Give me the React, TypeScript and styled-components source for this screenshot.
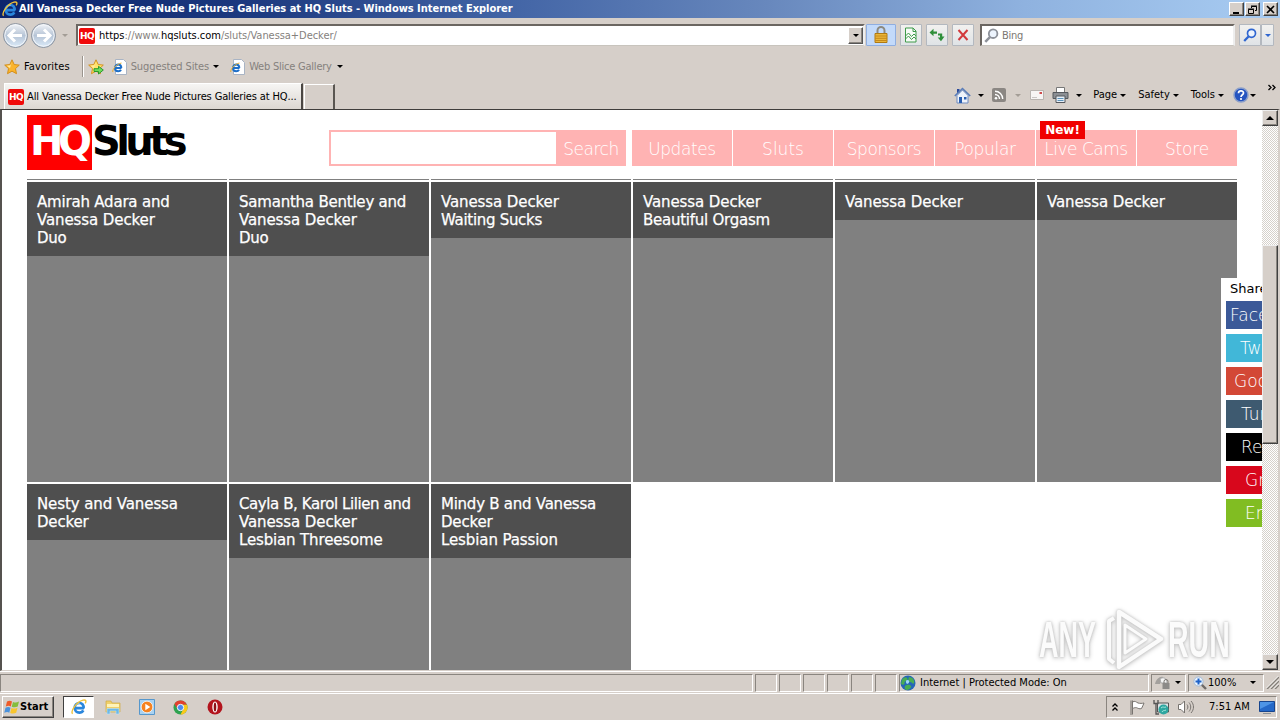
import React from "react";
import styled, { createGlobalStyle, css } from "styled-components";

const face = "#d6cfc9";

const GlobalStyle = createGlobalStyle`
  * { box-sizing: border-box; }
  body { margin: 0; overflow: hidden; background: ${face}; }
  svg { display: block; flex: none; }
`;

const Desktop = styled.div`
  width: 1280px;
  height: 720px;
  display: flex;
  flex-direction: column;
  overflow: hidden;
  background: ${face};
  color: #000;
  font-family: "DejaVu Sans Condensed", "DejaVu Sans", sans-serif;
  font-stretch: condensed;
  font-size: 11px;
`;

const Label = styled.span<{ $ls?: number; $color?: string; $size?: number }>`
  white-space: nowrap;
  line-height: 14px;
  letter-spacing: ${(p) => p.$ls ?? 0}px;
  color: ${(p) => p.$color ?? "#000"};
  font-size: ${(p) => p.$size ?? 11}px;
`;

const Gap = styled.div<{ $w?: number }>`
  flex: ${(p) => (p.$w ? `0 0 ${p.$w}px` : "1")};
`;

const Caret = styled.i<{ $dim?: boolean }>`
  flex: none;
  border: 3px solid transparent;
  border-top-color: ${(p) => (p.$dim ? "#a39d96" : "#000")};
  border-bottom: 0;
`;

/* Title bar */
const TitleBar = styled.header`
  height: 18px;
  flex: none;
  display: flex;
  align-items: center;
  padding: 0 2px 0 2px;
  background: linear-gradient(90deg, #0c246c 0%, #1d3a80 20%, #4365a6 40%, #6888bd 60%, #8fb2df 80%, #a8ccf2 100%);
`;
const TitleText = styled(Label)`
  font-weight: bold;
  margin-left: 1px;
`;
const CaptionButton = styled.div`
  width: 15px;
  height: 14px;
  margin-left: 1px;
  display: grid;
  place-items: center;
  background: ${face};
  border: 1px solid;
  border-color: #fff #404040 #404040 #fff;
  box-shadow: inset -1px -1px #8a857f;
`;

/* Address row */
const AddressRow = styled.div`
  height: 34px;
  flex: none;
  display: flex;
  align-items: center;
  padding-left: 2px;
`;
const Field = styled.div<{ $w: number }>`
  width: ${(p) => p.$w}px;
  height: 22px;
  display: flex;
  align-items: center;
  flex: none;
  background: #fff;
  border: 2px solid;
  border-color: #6b6661 #eee #eee #6b6661;
  border-bottom: 1px solid #c8c4bd;
`;
const DropButton = styled.div`
  width: 15px;
  height: 17px;
  display: grid;
  place-items: center;
  background: ${face};
  border: 1px solid;
  border-color: #fff #555 #555 #fff;
  box-shadow: inset -1px -1px #8a857f;
`;
const ToolButton = styled.div<{ $w: number; $blue?: boolean }>`
  width: ${(p) => p.$w}px;
  height: 22px;
  flex: none;
  display: grid;
  place-items: center;
  border-radius: 1px;
  background: ${(p) => (p.$blue ? "#c3dafa" : "linear-gradient(#f2f1ef, #dfe3e6)")};
  border: 1px solid ${(p) => (p.$blue ? "#8faee0" : "#b3b8bf")};
`;
const BlueCaret = styled(Caret)`
  border-top-color: #2f66d0;
`;
const Favicon = styled.div`
  width: 16px;
  height: 16px;
  flex: none;
  display: grid;
  place-items: center;
  border-radius: 2px;
  background: #f00a0a;
  color: #fff;
  font: bold 9px/16px "DejaVu Sans", sans-serif;
  letter-spacing: -0.6px;
`;

/* Favourites row */
const FavoritesRow = styled.div`
  height: 29px;
  flex: none;
  display: flex;
  align-items: center;
  padding-left: 4px;
`;
const Divider = styled.div`
  width: 2px;
  height: 21px;
  border-left: 1px solid #9a948d;
  border-right: 1px solid #fff;
`;

/* Tabs and command bar */
const TabRow = styled.div`
  height: 28px;
  flex: none;
  display: flex;
  align-items: center;
  padding-left: 4px;
`;
const Tab = styled.div`
  align-self: flex-end;
  width: 299px;
  height: 26px;
  display: flex;
  align-items: center;
  padding-left: 3px;
  background: linear-gradient(#f6f5f3, #dcd7d2);
  border: 1px solid #fff;
  border-bottom: 0;
  border-right: 2px solid #4a4642;
`;
const NewTab = styled.div`
  align-self: flex-end;
  width: 31px;
  height: 25px;
  margin-left: 1px;
  border: 1px solid #fff;
  border-bottom: 0;
  border-right: 2px solid #5a5651;
`;
const Overflow = styled.div`
  align-self: flex-start;
  padding-top: 3px;
`;

/* Viewport */
const Viewport = styled.main`
  height: 562px;
  flex: none;
  display: flex;
  overflow: hidden;
  border-top: 1px solid #3f3d3b;
  border-left: 2px solid #55524f;
  border-right: 2px solid ${face};
  border-bottom: 1px solid ${face};
`;
const Page = styled.div`
  position: relative;
  width: 1260px;
  height: 560px;
  overflow: hidden;
  background: #fff;
  padding-left: 25px;
  font-family: "DejaVu Sans", sans-serif;
  font-stretch: normal;
`;
const SiteHeader = styled.div`
  height: 69px;
  display: flex;
  align-items: flex-start;
  padding-top: 5px;
`;
const Logo = styled.div`
  display: flex;
  width: 302px;
  font: bold 40px/52px "DejaVu Sans", sans-serif;
`;
const LogoMark = styled.div`
  width: 65px;
  height: 55px;
  padding-left: 3px;
  background: #f00;
  color: #fff;
  letter-spacing: -5.5px;
`;
const LogoText = styled.div`
  letter-spacing: -4.6px;
`;
const thin = css`
  font-family: "DejaVu Sans ExtraLight", "DejaVu Sans Light", "DejaVu Sans", sans-serif;
  font-weight: 200;
  font-size: 17px;
  color: #fff;
`;
const SearchInput = styled.div`
  width: 227px;
  height: 36px;
  margin-top: 15px;
  border: 2px solid #ffb3b3;
  border-right: 0;
`;
const PinkButton = styled.div<{ $w: number; $ls?: number }>`
  ${thin}
  position: relative;
  width: ${(p) => p.$w}px;
  height: 36px;
  margin-top: 15px;
  line-height: 38px;
  text-align: center;
  background: #ffb3b3;
  letter-spacing: ${(p) => p.$ls ?? 0}px;
`;
const Nav = styled.nav`
  display: flex;
  gap: 1px;
  margin-left: 6px;
`;
const NewBadge = styled.span`
  position: absolute;
  left: 4px;
  top: -9px;
  width: 45px;
  height: 18px;
  background: #f00000;
  color: #fff;
  font: bold 12px/19px "DejaVu Sans", sans-serif;
  letter-spacing: 0;
`;
const PreviousRow = styled.div`
  display: grid;
  grid-template-columns: repeat(6, 200px);
  column-gap: 2px;
  margin-bottom: 2px;
`;
const CardEdge = styled.div`
  height: 1px;
  background: #808080;
`;
const Gallery = styled.div`
  display: grid;
  grid-template-columns: repeat(6, 200px);
  grid-auto-rows: 300px;
  gap: 2px;
`;
const Card = styled.article`
  background: #808080;
`;
const CardTitle = styled.div`
  padding: 11px 10px 9px;
  background: #4f4f4f;
  color: #fff;
  font-size: 15px;
  line-height: 18px;
  white-space: nowrap;
  -webkit-text-stroke: 0.25px #fff;
`;
const Line = styled.div<{ $ls: number }>`
  letter-spacing: ${(p) => p.$ls}px;
`;
const SharePanel = styled.aside`
  position: absolute;
  left: 1219px;
  top: 168px;
  width: 98px;
  height: 254px;
  padding: 4px 5px;
  background: #fff;
`;
const ShareTitle = styled.div`
  height: 14px;
  margin-bottom: 5px;
  padding-left: 4px;
  font-size: 13px;
  line-height: 14px;
  letter-spacing: 0;
`;
const ShareButton = styled.div<{ $bg: string; $pad: number }>`
  ${thin}
  height: 28px;
  margin-bottom: 5px;
  padding-left: ${(p) => p.$pad}px;
  line-height: 29px;
  background: ${(p) => p.$bg};
  white-space: nowrap;
`;
const Scrollbar = styled.div`
  width: 16px;
  height: 560px;
  display: flex;
  flex-direction: column;
  background: repeating-conic-gradient(#fff 0 25%, #d6d1cb 0 50%) 0 0 / 2px 2px;
`;
const ScrollButton = styled.div`
  height: 16px;
  display: grid;
  place-items: center;
  background: ${face};
  border: 1px solid;
  border-color: #eee #404040 #404040 #eee;
  box-shadow: inset -1px -1px #8a857f;
`;
const Thumb = styled(ScrollButton)`
  height: 199px;
  margin-top: 119px;
  margin-bottom: auto;
`;
const Watermark = styled.div`
  position: absolute;
  left: 1037px;
  top: 496px;
  display: flex;
  align-items: center;
  height: 68px;
  color: #fbfbfb;
  font: bold 50px/68px "Liberation Sans Narrow", "Liberation Sans", sans-serif;
  filter: drop-shadow(0 0 1px #c4c4c4) drop-shadow(0 1px 2px #c4c4c4);
`;
const MarkWord = styled.span<{ $w: number; $scale: number }>`
  width: ${(p) => p.$w}px;
  transform: scaleX(${(p) => p.$scale});
  transform-origin: left center;
`;

/* Status bar */
const StatusBar = styled.div`
  height: 23px;
  flex: none;
  display: flex;
  align-items: center;
  gap: 2px;
  border-top: 1px solid #fff;
  border-bottom: 1px solid #fff;
`;
const Pane = styled.div<{ $w: number; $pad?: number }>`
  width: ${(p) => p.$w}px;
  height: 18px;
  flex: none;
  display: flex;
  align-items: center;
  padding-left: ${(p) => p.$pad ?? 0}px;
  border: 1px solid;
  border-color: #8a857f #fff #fff #8a857f;
`;

/* Taskbar */
const Taskbar = styled.footer`
  height: 26px;
  flex: none;
  display: flex;
  align-items: center;
  padding: 0 3px 0 2px;
`;
const StartButton = styled.div`
  width: 52px;
  height: 22px;
  display: flex;
  align-items: center;
  padding-left: 1px;
  font-weight: bold;
  border: 1px solid;
  border-color: #fff #404040 #404040 #fff;
  box-shadow: inset -1px -1px #8a857f;
`;
const ActiveTask = styled.div`
  width: 31px;
  height: 22px;
  margin-left: 9px;
  display: grid;
  place-items: center;
  background: #fff;
  border: 1px solid;
  border-color: #404040 #fff #fff #404040;
`;
const Tray = styled.div`
  width: 171px;
  height: 22px;
  display: flex;
  align-items: center;
  padding-left: 4px;
  border: 1px solid;
  border-color: #8a857f #fff #fff #8a857f;
`;

const IEIcon = ({ size = 16 }: { size?: number }) => (
  <svg width={size} height={size} viewBox="0 0 16 16" fill="none">
    <path d="M13 9.200H4.600M12.600 9.300c.2-3.300-1.500-5.300-4.200-5.300S3.700 6 3.700 8.800s2 4.900 4.600 4.900c1.900 0 3.300-.9 4-2.300" stroke="#2a86dc" strokeWidth="2.700" />
    <path d="M4.600 6.800c.8-1.700 2-2.500 4-2.400" stroke="#9ad6fb" strokeWidth=".9" />
    <path d="M1.600 14.800C-.8 12 5.500 3 12 1.200c3-.8 3.500 1 2.200 3.200" stroke="#f0c23a" strokeWidth="1.400" />
  </svg>
);
const PageIE = () => (
  <svg width="16" height="16" viewBox="0 0 16 16" fill="none">
    <path d="M3.500.5h8l3 3v12h-11z" fill="#fff" stroke="#a9b4c4" />
    <path d="M9.500 9H3.500M9.300 9c0-2.300-1.200-3.500-3-3.500S3 7 3 9s1.300 3.300 3.200 3.300c1.300 0 2.300-.6 2.800-1.600" stroke="#1e6fc8" strokeWidth="2" />
    <path d="M.8 13C0 11 4 5 9.500 4" stroke="#e8b030" />
  </svg>
);
const Star = ({ add }: { add?: boolean }) => (
  <svg width="16" height="16" viewBox="0 0 16 16">
    <path d="M8 .8l2.200 4.700 5.100.6-3.800 3.500 1 5.100L8 12.200l-4.500 2.500 1-5.100L.7 6.100l5.100-.6z" fill={add ? "#ffe36a" : "#fbb42c"} stroke="#d08a14" strokeWidth=".9" />
    <path d="M8 2.500L6.500 6.300l-3.800.4L6 9z" fill="#ffe9a0" />
    {add && <path d="M6 9.700h4.500V7.300L15.300 11l-4.800 4v-2.500H6z" fill="#6fdc5c" stroke="#1d9227" strokeWidth=".9" />}
  </svg>
);
const NavCircle = ({ flip }: { flip?: boolean }) => (
  <svg width="27" height="27" viewBox="0 0 27 27">
    <defs>
      <linearGradient id="orb" x1="0" y1="0" x2="0" y2="1">
        <stop offset="0" stopColor="#f4f6f9" />
        <stop offset=".5" stopColor="#b6c4d6" />
        <stop offset="1" stopColor="#dcecfa" />
      </linearGradient>
    </defs>
    <circle cx="13.500" cy="13.500" r="12" fill="url(#orb)" stroke="#8b939e" />
    <circle cx="13.500" cy="13.500" r="10.700" fill="none" stroke="#f3f6fa" />
    <path d={flip ? "M14 7.500l6 6-6 6M19.500 13.500H7" : "M13 7.500l-6 6 6 6M7.500 13.500H20"} fill="none" stroke="#fff" strokeWidth="3" />
  </svg>
);
const Lock = () => (
  <svg width="16" height="18" viewBox="0 0 16 18">
    <path d="M4.500 8V4.500a3.500 3.500 0 017 0V8" fill="none" stroke="#8d8a80" strokeWidth="2" />
    <path d="M2 7.500h12v9H2z" fill="#eab53a" stroke="#b07a12" />
    <path d="M2 10h12M2 12.300h12M2 14.500h12" stroke="#c58a1b" />
  </svg>
);
const BrokenPage = () => (
  <svg width="14" height="16" viewBox="0 0 14 16">
    <path d="M1.500 1h7.500l3 3v11h-10.500z" fill="#f6fbf6" stroke="#3e9a4a" />
    <path d="M9 1v3.500h3M1.500 9l3-3 3 3.500L10 7l2 2M1.500 12l3-3 3 3.500L10 10l2 2" fill="none" stroke="#3e9a4a" />
  </svg>
);
const Refresh = () => (
  <svg width="16" height="14" viewBox="0 0 16 14">
    <path d="M.5 4.500L4.500 .8V3.500H8V5.700H4.500V8.200z" fill="#2f8f3a" />
    <path d="M15.500 8.500L12 13.200L8.700 9.500H11V7.500H9V5.500H13.200V8.500z" fill="#2f8f3a" />
  </svg>
);
const Stop = () => (
  <svg width="12" height="12" viewBox="0 0 12 12">
    <path d="M1.500 1l9 10M10.500 1l-9 10" stroke="#d2393c" strokeWidth="2" />
  </svg>
);
const Glass = ({ color = "#2f66d0", size = 14 }: { color?: string; size?: number }) => (
  <svg width={size} height={size} viewBox="0 0 14 14">
    <circle cx="8.500" cy="5.300" r="4" fill="#edf4fd" stroke={color} strokeWidth="1.700" />
    <path d="M5.500 8.500L1.200 13" stroke={color} strokeWidth="2.300" />
  </svg>
);
const House = () => (
  <svg width="17" height="17" viewBox="0 0 17 17">
    <path d="M3 2h2.500v4H3z" fill="#2b4a9a" />
    <path d="M3 8.500L8.500 3 14 8.500V16H3z" fill="#eef3fb" stroke="#6c8bc0" />
    <path d="M.8 9L8.500 1.500 16.200 9" fill="none" stroke="#5a7db8" strokeWidth="1.600" />
    <path d="M5 10h3v6H5z" fill="#2a5fb0" />
    <path d="M10 10h2.500v2.500H10z" fill="#2a5fb0" />
  </svg>
);
const Feed = () => (
  <svg width="14" height="14" viewBox="0 0 14 14">
    <rect width="14" height="14" rx="2" fill="#8b8783" />
    <circle cx="4" cy="10.300" r="1.300" fill="#fff" />
    <path d="M3 6.500a4.500 4.500 0 014.500 4.500M3 3.300A7.700 7.700 0 0110.700 11" fill="none" stroke="#fff" strokeWidth="1.400" />
  </svg>
);
const Mail = () => (
  <svg width="14" height="10" viewBox="0 0 14 10">
    <path d="M.5.5h13v9H.5z" fill="#f7f5f4" stroke="#b9b4b0" />
    <path d="M9.500 2h2.500v2H9.500z" fill="#cf4b4b" />
    <path d="M2 7.500h5" stroke="#c9c6c4" />
  </svg>
);
const Printer = () => (
  <svg width="17" height="16" viewBox="0 0 17 16">
    <path d="M4.500.5h8v5h-8z" fill="#fff" stroke="#777" />
    <path d="M1 5.500h15v6H1z" fill="#8c8f94" stroke="#55585d" />
    <path d="M4 9h9v6.500H4z" fill="#e8f0f8" stroke="#55585d" />
    <path d="M5.500 11.500h6M5.500 13.500h6" stroke="#5b93bb" />
  </svg>
);
const Help = () => (
  <svg width="16" height="16" viewBox="0 0 16 16">
    <circle cx="8" cy="8" r="7" fill="#2554c0" stroke="#8b9fc9" strokeWidth="1.500" />
    <path d="M5.500 6.200C5.500 3.200 10.500 3.200 10.500 6c0 1.800-2.500 1.700-2.500 4" fill="none" stroke="#fff" strokeWidth="1.700" />
    <circle cx="8" cy="12" r="1.100" fill="#fff" />
  </svg>
);
const Globe = () => (
  <svg width="16" height="16" viewBox="0 0 16 16">
    <circle cx="8" cy="8" r="7.500" fill="#2566b8" />
    <path d="M2 4.500C5 1 7 2 7.500 4S4 6 4.500 8s-2 2-3.500 1zM9 2c4 0 6 4 5 6s-2-1-4-1-2-3-1-5zM5 11c3-2 5-1 6 0s-2 4-4 4-3-2-2-4z" fill="#47ad54" />
    <path d="M6 5.500c2-1.500 4 0 3 2s-3 1.500-3-.5z" fill="#9ed8f7" />
  </svg>
);
const WindowsFlag = () => (
  <svg width="16" height="16" viewBox="0 0 16 16">
    <path d="M3 2.500c2-1 3.500-1 5 0L6.800 7.500c-1.500-1-3-.8-5 0z" fill="#ee5b29" />
    <path d="M9 3c2 .9 3.700.8 6-.5L13.700 7.500c-2 1-3.800 1-6 .2z" fill="#85bd3c" />
    <path d="M1.500 8.700c2-1 3.500-1 5 0l-1.200 5c-1.500-1-3-.8-5 0z" fill="#4a92dc" />
    <path d="M7.500 9c2 .9 3.700.8 6-.3l-1.300 5c-2 1-3.800 1-6 .2z" fill="#f8c52d" />
  </svg>
);
const Folder = () => (
  <svg width="16" height="16" viewBox="0 0 16 16">
    <path d="M1 2h5l1 2h8v9H1z" fill="#efd06b" stroke="#d1a940" strokeWidth=".7" />
    <path d="M2 5h12v3H2z" fill="#fff3b8" />
    <path d="M2 15V9.500h12V15h-3v-3H5v3z" fill="#6db8e6" stroke="#bfe2f6" strokeWidth=".6" />
  </svg>
);
const MediaPlayer = () => (
  <svg width="16" height="16" viewBox="0 0 16 16">
    <path d="M.5.5h15v15H.5z" fill="#a9d2f1" stroke="#5697cc" />
    <circle cx="8" cy="8" r="5.800" fill="#f58220" stroke="#fff" strokeWidth=".7" />
    <path d="M6.300 4.700l5 3.300-5 3.300z" fill="#fff" />
  </svg>
);
const Chrome = () => (
  <svg width="15" height="15" viewBox="0 0 16 16">
    <circle cx="8" cy="8" r="7.500" fill="#2fa24f" />
    <path d="M1.500 4.200A7.500 7.500 0 0114.800 5H8L5 9.500z" fill="#e2402f" />
    <path d="M8 5h6.900A7.500 7.500 0 018 15.500L11 9.500z" fill="#fbc919" />
    <circle cx="8" cy="8" r="3.400" fill="#4c8bf0" stroke="#fff" />
  </svg>
);
const Opera = () => (
  <svg width="16" height="16" viewBox="0 0 16 16">
    <circle cx="8" cy="8" r="7.500" fill="#b3141d" />
    <ellipse cx="8" cy="8" rx="2.700" ry="5.500" fill="#fff" />
    <ellipse cx="8" cy="8" rx="1.300" ry="4.600" fill="#8d1016" />
  </svg>
);
const Chevrons = ({ up }: { up?: boolean }) => (
  <svg width="8" height="8" viewBox="0 0 8 8" fill="none" stroke="#000" strokeWidth="1.300">
    <path d={up ? "M1.500 3.500L4 1l2.500 2.500M1.500 7.500L4 5l2.500 2.500" : "M.5 1L3 3.500.5 6M4.500 1L7 3.500 4.500 6"} />
  </svg>
);
const Flag = () => (
  <svg width="17" height="17" viewBox="0 0 17 17" fill="#fff" stroke="#77736f">
    <path d="M2 1.500v14.500M3.500 1.500v14" />
    <path d="M3.500 3C6 1.500 7 3 9 4c2 .5 4 .5 6 0-1 2-1.500 4-2.500 5.500-2 .8-3.500-.3-5-.8-1.500-.3-3 .3-4 1z" />
  </svg>
);
const Network = () => (
  <svg width="17" height="17" viewBox="0 0 17 17">
    <path d="M4.500 4h11v9h-11z" fill="#dde2e4" stroke="#555" />
    <path d="M1 1v3.500h4V1M3 4.500V15h3" fill="none" stroke="#555" strokeWidth="1.300" />
    <circle cx="10.500" cy="10.500" r="5" fill="#2ea6a0" />
    <path d="M8 9c2-2 3 0 5-1M9 13c1-2 2-1 4-2" fill="none" stroke="#a5e8dc" />
  </svg>
);
const Speaker = () => (
  <svg width="18" height="16" viewBox="0 0 18 16" fill="none" stroke="#77736f">
    <path d="M1.500 5.500H4L7.500 2v12L4 10.500H1.500z" fill="#fff" />
    <path d="M10 5.500c1.200 1.500 1.200 3.500 0 5M12 3.500c2.300 2.700 2.300 6.300 0 9M14 2c3.300 3.500 3.300 8.500 0 12" />
  </svg>
);
const DesktopIcon = () => (
  <svg width="16" height="15" viewBox="0 0 16 15">
    <path d="M.5 1.500h15v10H.5z" fill="#2468c8" stroke="#17458e" />
    <path d="M1 2h14L1 9z" fill="#4d94e6" />
    <path d="M4 13.500h8" stroke="#8b9198" strokeWidth="1" />
  </svg>
);
const Privacy = () => (
  <svg width="16" height="14" viewBox="0 0 16 14">
    <path d="M0 8c1-5 5-8 8-7 1 2-2 4-3 7z" fill="#a3a09d" />
    <path d="M5 3c4-3 7 0 7 4H6z" fill="#f6f6f6" stroke="#aaa" />
    <path d="M9 7V5.500a2 2 0 014 0V7" fill="none" stroke="#77736f" />
    <path d="M7.500 7h7v6h-7z" fill="#8c8a88" />
  </svg>
);
const Zoom = () => (
  <svg width="14" height="14" viewBox="0 0 14 14">
    <path d="M8 8l5 5" stroke="#6f6a66" strokeWidth="2.400" />
    <circle cx="5.500" cy="5.500" r="4.600" fill="#eaf3fd" stroke="#a4bbd8" />
    <path d="M5.500 2.500v6M2.500 5.500h6" stroke="#1f62c8" strokeWidth="2" />
  </svg>
);
const Grip = () => (
  <svg width="13" height="13" viewBox="0 0 13 13" fill="none">
    <path d="M1 13L13 1M5 13l8-8M9 13l4-4" stroke="#85807a" strokeWidth="1.500" />
    <path d="M0 12.500L12.500 0M4 12.500L13 3.500M8 12.500L13 7.500" stroke="#fff" strokeWidth=".8" />
  </svg>
);
const PlayMark = () => (
  <svg width="60" height="64" viewBox="0 0 60 64" fill="none" stroke="#fbfbfb" strokeWidth="4.500" strokeLinejoin="round">
    <path d="M14 4L56 31 14 59z" />
    <path d="M20 17L41 31 20 45z" strokeWidth="3" />
    <path d="M9 10L4 13v38l5 4" strokeWidth="4" />
  </svg>
);

const nav: { text: string; ls?: number; badge?: boolean }[] = [
  { text: "Updates", ls: -0.4 },
  { text: "Sluts" },
  { text: "Sponsors", ls: -0.4 },
  { text: "Popular", ls: -0.3 },
  { text: "Live Cams", ls: -0.5, badge: true },
  { text: "Store", ls: -0.2 },
];

const cards: [string, number][][] = [
  [["Amirah Adara and", -0.2], ["Vanessa Decker", -0.1], ["Duo", -0.3]],
  [["Samantha Bentley and", -0.22], ["Vanessa Decker", -0.1], ["Duo", -0.3]],
  [["Vanessa Decker", -0.1], ["Waiting Sucks", -0.3]],
  [["Vanessa Decker", -0.1], ["Beautiful Orgasm", -0.25]],
  [["Vanessa Decker", -0.1]],
  [["Vanessa Decker", -0.1]],
  [["Nesty and Vanessa", -0.1], ["Decker", -0.2]],
  [["Cayla B, Karol Lilien and", -0.41], ["Vanessa Decker", -0.1], ["Lesbian Threesome", -0.15]],
  [["Mindy B and Vanessa", -0.25], ["Decker", -0.2], ["Lesbian Passion", -0.1]],
];

const shares: [string, string, number][] = [
  ["Facebook", "#3b5998", 4],
  ["Twitter", "#41b7d8", 14],
  ["Google+", "#d34836", 8],
  ["Tumblr", "#3e5a70", 15],
  ["Reddit", "#000", 15],
  ["Gr", "#d8071c", 19],
  ["Email", "#81bd22", 19],
];

export default function App() {
  return (
    <Desktop>
      <GlobalStyle />
      <TitleBar>
        <IEIcon />
        <TitleText $color="#fff" $ls={-0.02}>All Vanessa Decker Free Nude Pictures Galleries at HQ Sluts - Windows Internet Explorer</TitleText>
        <Gap />
        <CaptionButton><svg width="9" height="9"><path d="M1 7h6v2H1z" /></svg></CaptionButton>
        <CaptionButton><svg width="9" height="9" fill="none" stroke="#000"><path d="M3.500 3V1.500h5v4H7M3 1h6" /><path d="M.5 4.500h5v4h-5zM0 4h6" /></svg></CaptionButton>
        <Gap $w={2} />
        <CaptionButton><svg width="9" height="9"><path d="M1 1l7 7M8 1L1 8" stroke="#000" strokeWidth="1.600" /></svg></CaptionButton>
      </TitleBar>

      <AddressRow>
        <NavCircle /><Gap $w={1} /><NavCircle flip />
        <Gap $w={5} /><Caret $dim /><Gap $w={8} />
        <Field $w={789}>
          <Gap $w={1} /><Favicon>HQ</Favicon><Gap $w={4} />
          <Label $ls={0}>https</Label><Label $ls={0} $color="#85817d">://www.</Label><Label $ls={0}>hqsluts.com</Label><Label $ls={-0.05} $color="#85817d">/sluts/Vanessa+Decker/</Label>
          <Gap /><DropButton><Caret /></DropButton>
        </Field>
        <Gap $w={1} /><ToolButton $w={30} $blue><Lock /></ToolButton>
        <Gap $w={4} /><ToolButton $w={22}><BrokenPage /></ToolButton>
        <Gap $w={4} /><ToolButton $w={22}><Refresh /></ToolButton>
        <Gap $w={4} /><ToolButton $w={22}><Stop /></ToolButton>
        <Gap $w={6} />
        <Field $w={255}>
          <Gap $w={2} /><Glass color="#8d9199" size={15} /><Gap $w={3} /><Label $ls={-0.3} $color="#7b7773">Bing</Label>
        </Field>
        <Gap $w={4} /><ToolButton $w={22}><Glass /></ToolButton><ToolButton $w={13}><BlueCaret /></ToolButton>
      </AddressRow>

      <FavoritesRow>
        <Star /><Gap $w={4} /><Label $ls={0.12}>Favorites</Label>
        <Gap $w={12} /><Divider /><Gap $w={4} /><Star add />
        <Gap $w={8} /><PageIE /><Gap $w={3} /><Label $ls={-0.1} $color="#85817d">Suggested Sites</Label><Gap $w={4} /><Caret />
        <Gap $w={11} /><PageIE /><Gap $w={3} /><Label $ls={-0.22} $color="#85817d">Web Slice Gallery</Label><Gap $w={5} /><Caret />
      </FavoritesRow>

      <TabRow>
        <Tab><Favicon>HQ</Favicon><Gap $w={3} /><Label $ls={-0.13}>All Vanessa Decker Free Nude Pictures Galleries at HQ...</Label></Tab>
        <NewTab />
        <Gap />
        <House /><Gap $w={7} /><Caret />
        <Gap $w={8} /><Feed /><Gap $w={9} /><Caret $dim />
        <Gap $w={9} /><Mail /><Gap $w={8} /><Printer /><Gap $w={7} /><Caret />
        <Gap $w={11} /><Label>Page</Label><Gap $w={3} /><Caret />
        <Gap $w={12} /><Label>Safety</Label><Gap $w={3} /><Caret />
        <Gap $w={12} /><Label>Tools</Label><Gap $w={3} /><Caret />
        <Gap $w={9} /><Help /><Gap $w={1} /><Caret /><Gap $w={12} /><Overflow><Chevrons /></Overflow><Gap $w={4} />
      </TabRow>

      <Viewport>
        <Page>
          <SiteHeader>
            <Logo><LogoMark>HQ</LogoMark><LogoText>Sluts</LogoText></Logo>
            <SearchInput />
            <PinkButton $w={70} $ls={-0.5}>Search</PinkButton>
            <Nav>
              {nav.map((n) => (
                <PinkButton key={n.text} $w={100} $ls={n.ls}>
                  {n.text}
                  {n.badge && <NewBadge>New!</NewBadge>}
                </PinkButton>
              ))}
            </Nav>
          </SiteHeader>
          <PreviousRow>{[0, 1, 2, 3, 4, 5].map((i) => <CardEdge key={i} />)}</PreviousRow>
          <Gallery>
            {cards.map((lines, i) => (
              <Card key={i}>
                <CardTitle>{lines.map(([t, ls]) => <Line key={t} $ls={ls}>{t}</Line>)}</CardTitle>
              </Card>
            ))}
          </Gallery>
          <SharePanel>
            <ShareTitle>Share</ShareTitle>
            {shares.map(([t, bg, pad]) => <ShareButton key={t} $bg={bg} $pad={pad}>{t}</ShareButton>)}
          </SharePanel>
          <Watermark>
            <MarkWord $w={66} $scale={0.54}>ANY</MarkWord>
            <PlayMark />
            <Gap $w={3} />
            <MarkWord $w={66} $scale={0.57}>RUN</MarkWord>
          </Watermark>
        </Page>
        <Scrollbar>
          <ScrollButton><svg width="8" height="4"><path d="M0 4l4-4 4 4z" /></svg></ScrollButton>
          <Thumb />
          <ScrollButton><svg width="8" height="4"><path d="M0 0l4 4 4-4z" /></svg></ScrollButton>
        </Scrollbar>
      </Viewport>

      <StatusBar>
        <Pane $w={753} />
        {[0, 1, 2, 3, 4, 5].map((i) => <Pane key={i} $w={22} />)}
        <Pane $w={250} $pad={0}><Globe /><Gap $w={4} /><Label>Internet | Protected Mode: On</Label></Pane>
        <Pane $w={35} $pad={3}><Privacy /><Gap $w={4} /><Caret /></Pane>
        <Pane $w={76} $pad={4}><Zoom /><Gap $w={1} /><Label>100%</Label><Gap $w={14} /><Caret /></Pane>
        <Grip />
      </StatusBar>

      <Taskbar>
        <StartButton><WindowsFlag /><Label $ls={0.05}>Start</Label></StartButton>
        <ActiveTask><IEIcon /></ActiveTask>
        <Gap $w={11} /><Folder /><Gap $w={18} /><MediaPlayer /><Gap $w={18} /><Chrome /><Gap $w={19} /><Opera />
        <Gap />
        <Tray>
          <Chevrons up /><Gap $w={10} /><Flag /><Gap $w={7} /><Network /><Gap $w={7} /><Speaker />
          <Gap $w={14} /><Label>7:51 AM</Label><Gap $w={9} /><DesktopIcon />
        </Tray>
      </Taskbar>
    </Desktop>
  );
}
